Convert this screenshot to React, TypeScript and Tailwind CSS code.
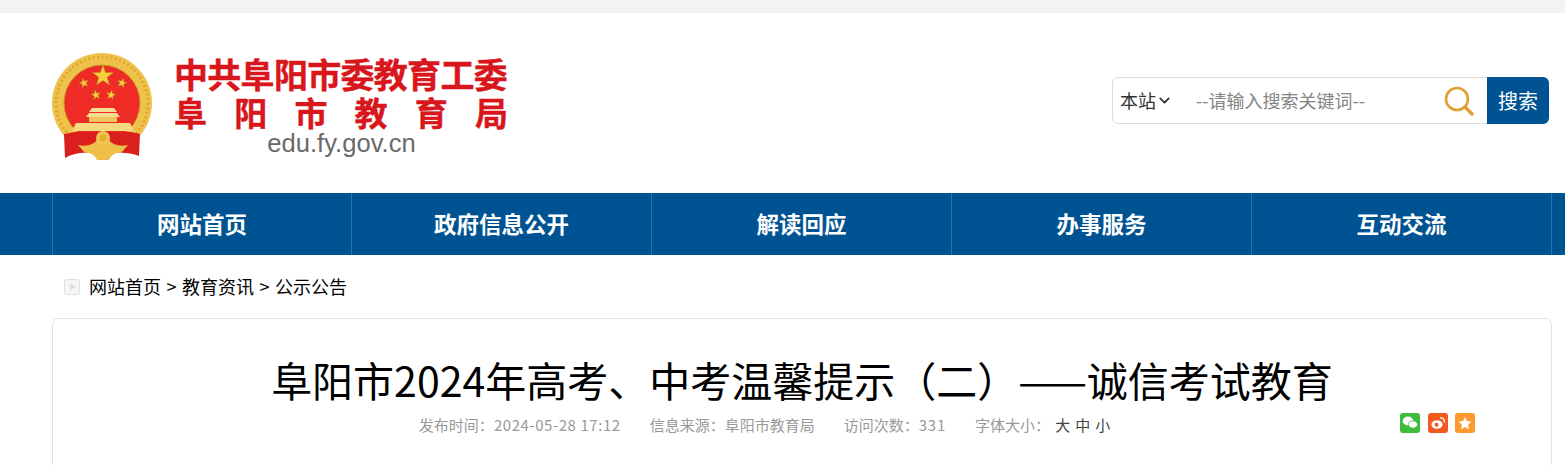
import { ChevronDown } from "lucide-react";

const navItems = ["网站首页", "政府信息公开", "解读回应", "办事服务", "互动交流"];
const cjk = "font-['Noto_Sans_CJK_SC','Liberation_Sans',sans-serif]";

function Star({ x, y, r, rot = 0 }: { x: number; y: number; r: number; rot?: number }) {
  const pts: string[] = [];
  for (let i = 0; i < 10; i++) {
    const rad = i % 2 === 0 ? r : r * 0.4;
    const a = ((-90 + rot + i * 36) * Math.PI) / 180;
    pts.push(`${(x + rad * Math.cos(a)).toFixed(2)},${(y + rad * Math.sin(a)).toFixed(2)}`);
  }
  return <polygon points={pts.join(" ")} fill="#f6cf3c" stroke="#b5852a" strokeWidth="0.5" />;
}

function Emblem() {
  return (
    <svg width="102" height="110" viewBox="0 0 102 110" className="shrink-0">
      <circle cx="51" cy="51" r="50" fill="#efc24c" />
      <circle cx="51" cy="51" r="46" fill="none" stroke="#dea730" strokeWidth="3" strokeDasharray="2 2.5" />
      <circle cx="51" cy="51" r="38" fill="#ee2b25" stroke="#c99326" strokeWidth="1" />
      <Star x={52} y={24} r={11} />
      <Star x={33} y={31} r={5} rot={-15} />
      <Star x={71} y={31} r={5} rot={15} />
      <Star x={45} y={43} r={5} rot={-10} />
      <Star x={60} y={43} r={5} rot={10} />
      {/* gate */}
      <path d="M38 60 L41 56 H63 L66 60 Z" fill="#f7dc8f" />
      <path d="M35 65 L38 61 H66 L69 65 Z" fill="#f7dc8f" />
      <rect x="38" y="65" width="28" height="5" fill="#efc65e" />
      <path d="M21 79 L25 71 H79 L83 79 Z" fill="#f7da80" />
      {/* ribbons */}
      <path d="M24 80 H80 L89 82 L88 104 C78 100 68 100 60 102 L44 102 C36 100 24 100 14 106 L13 82 Z" fill="#d9201d" />
      <path d="M27 93 C36 95 43 92 46 88 H58 C61 92 68 95 77 93 L70 101 C64 100 60 104 58 108 H46 C44 104 40 100 34 101 Z" fill="#eec04a" />
      <circle cx="52" cy="86" r="7" fill="#f0c651" />
      <circle cx="52" cy="86" r="3.5" fill="#e5ad33" />
    </svg>
  );
}

function Logo() {
  return (
    <div className="flex items-start">
      <Emblem />
      <div className="ml-[21px] w-[334px] mt-[2px]">
        <div className={`${cjk} text-[34px] leading-[40px] font-bold tracking-[-0.7px] text-[#d8161b] whitespace-nowrap [-webkit-text-stroke:0.4px_#d8161b]`}>
          中共阜阳市委教育工委
        </div>
        <div className={`${cjk} flex justify-between text-[33px] leading-[36px] font-bold text-[#d8161b] [-webkit-text-stroke:0.4px_#d8161b]`}>
          <span>阜</span>
          <span>阳</span>
          <span>市</span>
          <span>教</span>
          <span>育</span>
          <span>局</span>
        </div>
        <div className="-mt-[1px] pl-[1px] text-center font-['Liberation_Sans',sans-serif] text-[25.6px] leading-[28px] text-[#6a6a6a]">
          edu.fy.gov.cn
        </div>
      </div>
    </div>
  );
}

function SearchBox() {
  return (
    <div className={`${cjk} flex h-[47px] w-[437px] rounded-md border border-[#dcdcdc] bg-white`}>
      <div className="flex items-center pl-[7px] w-[83px] text-[18px] text-[#333]">
        本站
        <ChevronDown size={17} strokeWidth={2.5} className="text-[#333]" />
      </div>
      <div className="flex-1 flex items-center text-[18px] text-[#858585]">--请输入搜索关键词--</div>
      <div className="flex items-center pr-[13px]">
        <svg width="30" height="30" viewBox="0 0 30 30" fill="none" stroke="#e0a02f" strokeWidth="2.6" strokeLinecap="round">
          <circle cx="13" cy="13" r="11" />
          <path d="M21 21 L28 28" strokeWidth="3.4" />
        </svg>
      </div>
      <div className="-my-px -mr-px w-[62px] flex items-center justify-center rounded-r-md bg-[#005392] text-[20px] text-white">
        搜索
      </div>
    </div>
  );
}

function Share() {
  return (
    <div className="flex gap-2">
      <span className="w-5 h-5 rounded-[3px] bg-[#3ebc3c] flex items-center justify-center">
        <svg width="16" height="14" viewBox="0 0 16 14" fill="#fff">
          <ellipse cx="6" cy="5" rx="5.4" ry="4.4" />
          <ellipse cx="11" cy="8.5" rx="4.6" ry="3.7" stroke="#3ebc3c" strokeWidth="0.8" />
        </svg>
      </span>
      <span className="w-5 h-5 rounded-[3px] bg-[#f4591f] flex items-center justify-center">
        <svg width="16" height="14" viewBox="0 0 16 14" fill="none" stroke="#fff">
          <ellipse cx="7" cy="8.5" rx="5.6" ry="4.2" fill="#fff" stroke="none" />
          <circle cx="6.5" cy="8.8" r="2" fill="#f4591f" stroke="none" />
          <path d="M10 2 C13 1.5 15 3.5 14.3 6.5" strokeWidth="1.3" />
        </svg>
      </span>
      <span className="-ml-px w-5 h-5 rounded-[3px] bg-[#fd9a2c] flex items-center justify-center">
        <svg width="14" height="14" viewBox="0 0 24 24" fill="#fff">
          <path d="M12 1.5 L15.4 8.4 L23 9.5 L17.5 14.9 L18.8 22.5 L12 18.9 L5.2 22.5 L6.5 14.9 L1 9.5 L8.6 8.4 Z" />
        </svg>
      </span>
    </div>
  );
}

export default function App() {
  return (
    <div className={`${cjk} h-[465px] overflow-hidden bg-white`}>
      <div className="h-[13px] bg-[#f3f3f3]" />

      <header className="h-[180px] pl-[51px] pr-[16px] flex justify-between">
        <div className="pt-[39px]">
          <Logo />
        </div>
        <div className="pt-[64px]">
          <SearchBox />
        </div>
      </header>

      <nav className="h-[62px] bg-[#005392] pl-[52px]">
        <ul className="flex h-full border-r border-[#2f74a8] w-[1500px]">
          {navItems.map((item) => (
            <li
              key={item}
              className="w-[300px] first:w-[299px] flex items-center justify-center pb-[1px] border-l border-[#2f74a8] text-[22.5px] font-bold text-white"
            >
              {item}
            </li>
          ))}
        </ul>
      </nav>

      <div className="h-[63px] pl-[64px] flex items-center text-[18px] text-black">
        <svg width="16" height="16" viewBox="0 0 16 16" className="mr-[9px] shrink-0">
          <rect x="0.5" y="0.5" width="15" height="15" rx="2" fill="#f5f5f5" stroke="#e0e0e0" />
          <path d="M5 4 L11 8 L5 12 L7 8 Z" fill="#d6d6d6" />
        </svg>
        <span className="whitespace-pre [word-spacing:1.5px]">网站首页 &gt; 教育资讯 &gt; 公示公告</span>
      </div>

      <main className="ml-[52px] w-[1500px] h-[200px] rounded-t-md border border-[#e3e3e3] bg-white">
        <h1 className="mt-[30px] text-center text-[41px] leading-[60px] text-black font-normal">
          阜阳市2024年高考、中考温馨提示（二）——诚信考试教育
        </h1>
        <div className="relative mt-[4px] flex justify-center gap-[29px] pr-[70px] text-[15px] leading-[24px] text-[#999]">
          <span>
            发布时间：<span className="tracking-[0.56px]">2024-05-28 17:12</span>
          </span>
          <span>信息来源：阜阳市教育局</span>
          <span>
            访问次数：<span className="tracking-[0.8px]">331</span>
          </span>
          <span>
            字体大小：<span className="ml-[5px] tracking-[5px] text-[#444]">大中小</span>
          </span>
          <div className="absolute right-[76px] top-0">
            <Share />
          </div>
        </div>
      </main>
    </div>
  );
}
